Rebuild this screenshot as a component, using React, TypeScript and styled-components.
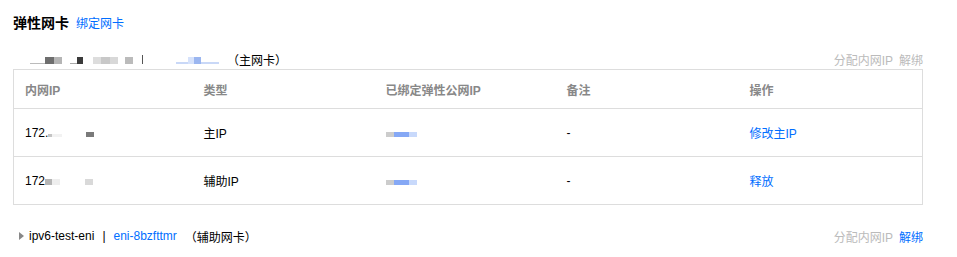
import React from "react";
import styled, { createGlobalStyle } from "styled-components";

const GlobalStyle = createGlobalStyle`
  html, body {
    margin: 0;
    padding: 0;
    background: #fff;
  }
  body {
    font-family: "Liberation Sans", Arial, "Noto Sans CJK SC", sans-serif;
    font-size: 12px;
    color: #000;
  }
`;

const Page = styled.div`
  padding: 12px 34px 0 13px;
`;

const Header = styled.div`
  display: flex;
  align-items: baseline;
  gap: 7px;
  height: 18px;
`;

const Title = styled.h3`
  margin: 0;
  font-size: 14px;
  font-weight: 700;
  color: #000;
`;

const Link = styled.a`
  color: #006eff;
  text-decoration: none;
  cursor: pointer;
  font-size: 12px;
`;

const Muted = styled.span`
  color: #bbb;
`;

const EniBar = styled.div<{ $top: number }>`
  display: flex;
  align-items: center;
  justify-content: space-between;
  height: 20px;
  margin-top: ${(p) => p.$top}px;
`;

const EniName = styled.div`
  display: flex;
  align-items: center;
`;

const Caret = styled.span`
  width: 0;
  height: 0;
  border-top: 4px solid transparent;
  border-bottom: 4px solid transparent;
  border-left: 5px solid #888;
  margin: 0 5px 0 6px;
`;

const Sep = styled.span`
  margin: 0 8px;
  color: #000;
`;

const Kind = styled.span`
  margin-left: 8px;
  color: #000;
`;

const Actions = styled.div`
  display: flex;
  gap: 6px;
`;

const Pixels = styled.span`
  display: inline-flex;
  align-items: flex-end;
  height: 9px;
`;

const Px = styled.i<{ $c: string; $w: number; $h?: number }>`
  display: block;
  width: ${(p) => p.$w}px;
  height: ${(p) => p.$h ?? 7}px;
  background: ${(p) => p.$c};
`;

const Table = styled.table`
  width: 909px;
  border-collapse: collapse;
  table-layout: fixed;
  border: 1px solid #ddd;
  margin-top: 0;
`;

const Th = styled.th`
  height: 38px;
  padding: 0 12px 0 11px;
  text-align: left;
  font-weight: 700;
  color: #888;
  border-bottom: 1px solid #ddd;
`;

const Td = styled.td`
  height: 47px;
  padding: 0 12px 0 11px;
  border-bottom: 1px solid #ddd;
  color: #000;
`;

const IpCell = styled.div`
  display: flex;
  align-items: center;
`;

type Block = [string, number, number?];

const Redacted = ({ blocks }: { blocks: Block[] }) => (
  <Pixels>
    {blocks.map(([c, w, h], i) => (
      <Px key={i} $c={c} $w={w} $h={h} />
    ))}
  </Pixels>
);

const primaryName: Block[] = [
  ["#fff", 17],
  ["#bbb", 15, 1],
  ["#6e6e6e", 9],
  ["#b5b5b5", 8],
  ["#fff", 8],
  ["#aaa", 7, 1],
  ["#3a3a3a", 6],
  ["#fff", 10],
  ["#ddd", 8],
  ["#c8c8c8", 9],
  ["#d8d8d8", 8],
  ["#fff", 7],
  ["#bbb", 8],
  ["#fff", 9],
  ["#555", 1, 9],
  ["#fff", 33],
  ["#c9d8f7", 12, 2],
  ["#d6e2fb", 6],
  ["#9bb6f0", 7],
  ["#c9d8f7", 18, 2],
];

const eipBlocks: Block[] = [
  ["#ccc", 8, 5],
  ["#85a8f5", 15, 5],
  ["#c8d9fb", 8, 5],
];

const rows = [
  {
    ip: "172.",
    tail: [["#c4c4c4", 4, 3], ["#f2f2f2", 10, 3], ["#fff", 24], ["#7a7a7a", 8, 5]] as Block[],
    type: "主IP",
    op: "修改主IP",
  },
  {
    ip: "172",
    tail: [["#b5b5b5", 7, 6], ["#eee", 8, 6], ["#fff", 25], ["#d9d9d9", 8, 6]] as Block[],
    type: "辅助IP",
    op: "释放",
  },
];

const widths = [179, 182, 181, 183, 184];
const heads = ["内网IP", "类型", "已绑定弹性公网IP", "备注", "操作"];

export default function App() {
  return (
    <>
      <GlobalStyle />
      <Page>
        <Header>
          <Title>弹性网卡</Title>
          <Link>绑定网卡</Link>
        </Header>

        <EniBar $top={19}>
          <EniName>
            <Redacted blocks={primaryName} />
            <Kind>（主网卡）</Kind>
          </EniName>
          <Actions>
            <Muted>分配内网IP</Muted>
            <Muted>解绑</Muted>
          </Actions>
        </EniBar>

        <Table>
          <colgroup>
            {widths.map((w, i) => (
              <col key={i} style={{ width: w }} />
            ))}
          </colgroup>
          <thead>
            <tr>
              {heads.map((h) => (
                <Th key={h}>{h}</Th>
              ))}
            </tr>
          </thead>
          <tbody>
            {rows.map((r) => (
              <tr key={r.op}>
                <Td>
                  <IpCell>
                    {r.ip}
                    <Redacted blocks={r.tail} />
                  </IpCell>
                </Td>
                <Td>{r.type}</Td>
                <Td>
                  <Redacted blocks={eipBlocks} />
                </Td>
                <Td>-</Td>
                <Td>
                  <Link>{r.op}</Link>
                </Td>
              </tr>
            ))}
          </tbody>
        </Table>

        <EniBar $top={21}>
          <EniName>
            <Caret />
            ipv6-test-eni
            <Sep>|</Sep>
            <Link>eni-8bzfttmr</Link>
            <Kind>（辅助网卡）</Kind>
          </EniName>
          <Actions>
            <Muted>分配内网IP</Muted>
            <Link>解绑</Link>
          </Actions>
        </EniBar>
      </Page>
    </>
  );
}
